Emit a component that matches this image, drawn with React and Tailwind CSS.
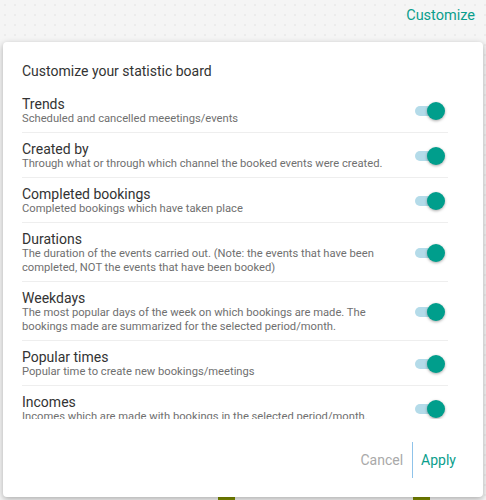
import React, { useState } from "react";

const items = [
  { title: "Trends", desc: "Scheduled and cancelled meeetings/events" },
  {
    title: "Created by",
    desc: "Through what or through which channel the booked events were created.",
  },
  { title: "Completed bookings", desc: "Completed bookings which have taken place" },
  {
    title: "Durations",
    desc: "The duration of the events carried out. (Note: the events that have been completed, NOT the events that have been booked)",
  },
  {
    title: "Weekdays",
    desc: "The most popular days of the week on which bookings are made. The bookings made are summarized for the selected period/month.",
  },
  { title: "Popular times", desc: "Popular time to create new bookings/meetings" },
  { title: "Incomes", desc: "Incomes which are made with bookings in the selected period/month." },
];

function Toggle({ on, onClick }) {
  return (
    <button onClick={onClick} className="relative w-[31px] h-[18px] shrink-0 flex items-center">
      <span
        className={`block w-[25px] h-[10px] rounded-full ${on ? "bg-[#b4dbe9]" : "bg-[#cfcfcf]"}`}
      />
      <span
        className={`absolute top-0 w-[18px] h-[18px] rounded-full shadow-[0_1px_3px_rgba(0,0,0,0.35)] ${
          on ? "left-[12px] bg-[#009e8c]" : "left-[-4px] bg-[#fafafa]"
        }`}
      />
    </button>
  );
}

export default function App() {
  const [enabled, setEnabled] = useState(items.map(() => true));

  function flip(i) {
    const next = [...enabled];
    next[i] = !next[i];
    setEnabled(next);
  }

  return (
    <div
      className="relative w-[486px] h-[500px] overflow-hidden bg-[#f5f5f5] bg-[radial-gradient(#ececec_1px,transparent_1px)] bg-[size:10px_10px] font-['Roboto',sans-serif] flex flex-col"
    >
      <div className="flex justify-end pr-[11px] pt-[6px] h-[42px]">
        <span className="text-[14.5px] text-[#0a9e8c] leading-[20px]">Customize</span>
      </div>
      <div className="flex-1 flex items-end pb-0">
        <div className="w-[218px]" />
        <div className="w-[17px] h-[4px] bg-[#7d8c00]" />
        <div className="w-[178px]" />
        <div className="w-[17px] h-[4px] bg-[#7d8c00]" />
      </div>

      <div className="absolute left-[3px] top-[42px] w-[480px] h-[455px] bg-white rounded-[4px] shadow-[0_2px_6px_rgba(0,0,0,0.3)] flex flex-col">
        <div className="pl-[19px] pr-[35px] pt-[20px]">
          <h2 className="text-[14px] leading-[18px] text-[#333]">Customize your statistic board</h2>
        </div>
        <div className="mt-[8px] pl-[19px] pr-[35px] h-[331px] overflow-hidden">
          {items.map((item, i) => (
            <div
              key={item.title}
              className={`flex items-center justify-between pt-[8px] pb-[6px] pr-[2px] ${
                i < items.length - 1 ? "border-b border-[#eeeeee]" : ""
              }`}
            >
              <div className="w-[366px]">
                <div className="text-[14px] leading-[16px] text-[#333]">{item.title}</div>
                <div className="text-[11.2px] leading-[14px] text-[#707070]">{item.desc}</div>
              </div>
              <Toggle on={enabled[i]} onClick={() => flip(i)} />
            </div>
          ))}
        </div>
        <div className="flex justify-end items-center mt-auto mb-[19px] pr-[27px]">
          <button className="text-[14px] text-[#a9a9a9] pr-[9px]">Cancel</button>
          <button className="text-[14px] text-[#0a9e8c] border-l border-[#8fc3ea] h-[36px] pl-[8px]">
            Apply
          </button>
        </div>
      </div>
    </div>
  );
}
